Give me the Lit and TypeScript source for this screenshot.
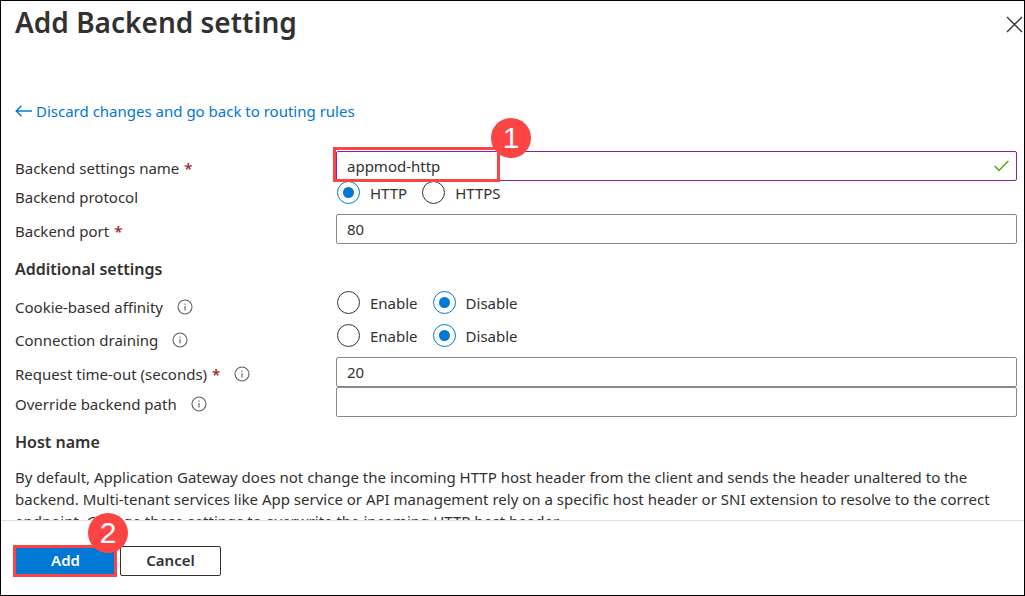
import { LitElement, html, css, nothing } from "lit";
import { customElement } from "lit/decorators.js";

interface Choice {
  value: string;
  checked?: boolean;
}

const infoIcon = html`<svg class="info" viewBox="0 0 16 16" role="img" aria-label="More information">
  <circle cx="8" cy="8" r="7" fill="none" stroke="#605e5c" stroke-width="1.1" />
  <path d="M8 7v4.6M8 4.4v1.3" fill="none" stroke="#605e5c" stroke-width="1.1" />
</svg>`;

@customElement("app-root")
export class AppRoot extends LitElement {
  static styles = css`
    :host {
      display: block;
      color: #323130;
      font: 15px/22px "Noto Sans", "Open Sans", sans-serif;
    }
    * {
      box-sizing: border-box;
    }
    .panel {
      display: flex;
      flex-direction: column;
      height: 100vh;
      border: 1px solid #000;
      background: #fff;
    }
    .header {
      display: flex;
      justify-content: space-between;
      align-items: center;
      padding: 1px 1px 0 14px;
    }
    .title {
      margin: 0;
      font-size: 28px;
      line-height: 40px;
      font-weight: 600;
    }
    .close {
      display: flex;
      padding: 4px 0 0;
      border: 0;
      background: none;
    }
    .close svg {
      width: 17px;
      height: 17px;
    }
    .body {
      flex: 1;
      min-height: 0;
      overflow: hidden;
      padding: 58px 7px 0 14px;
    }
    .back {
      display: flex;
      align-items: center;
      gap: 4px;
      width: fit-content;
      margin-bottom: 29px;
      color: #0078d4;
      text-decoration: none;
    }
    .back svg {
      width: 17px;
      height: 14px;
    }
    .row {
      display: grid;
      grid-template-columns: 321px 1fr;
    }
    .label {
      display: flex;
      align-items: center;
      align-self: start;
      padding-top: 6px;
    }
    .label.group {
      padding-top: 5px;
    }
    .required {
      margin-left: 5px;
      color: #a4262c;
      font-weight: 600;
    }
    .info {
      width: 16px;
      height: 16px;
      margin-left: 14px;
    }
    .field {
      position: relative;
    }
    .input {
      display: block;
      width: 100%;
      height: 30px;
      padding: 0 10px;
      border: 1px solid #8a8886;
      border-radius: 2px;
      background: #fff;
      color: inherit;
      font: inherit;
      outline: 0;
    }
    .input.edited {
      border-color: #881fa3;
    }
    .check {
      position: absolute;
      right: 8px;
      top: 9px;
      width: 15px;
      height: 12px;
    }
    .choices {
      display: flex;
      gap: 15px;
      height: 33px;
      padding: 0 0 0 1px;
    }
    .choice {
      display: flex;
      align-items: center;
      gap: 10px;
      height: 23px;
    }
    .radio {
      display: grid;
      place-items: center;
      appearance: none;
      width: 23px;
      height: 23px;
      margin: 0;
      border: 1px solid #323130;
      border-radius: 50%;
    }
    .radio:checked {
      border-color: #0078d4;
    }
    .radio:checked::before {
      content: "";
      width: 11px;
      height: 11px;
      border-radius: 50%;
      background: #0078d4;
    }
    .section {
      margin: 0;
      padding: 14px 0 11px;
      font-size: 16px;
      line-height: 22px;
      font-weight: 600;
    }
    .text {
      margin: 2px 0 0;
    }
    .footer {
      display: flex;
      gap: 4px;
      padding: 25px 14px 19px;
      border-top: 1px solid #e1dfdd;
    }
    .action {
      position: relative;
      display: flex;
    }
    .button {
      width: 101px;
      height: 30px;
      padding: 0 0 2px;
      border: 1px solid #323130;
      border-radius: 2px;
      background: #fff;
      color: inherit;
      font: inherit;
      font-weight: 600;
    }
    .button.primary {
      border-color: #0078d4;
      background: #0078d4;
      color: #fff;
    }
    .callout {
      position: absolute;
      border: 3px solid #fc4444;
      pointer-events: none;
    }
    .callout.name {
      left: -3px;
      top: -4px;
      width: 167px;
      height: 35px;
    }
    .callout.add {
      inset: -1px -1px -1px -2px;
    }
    .badge {
      position: absolute;
      width: 40px;
      height: 40px;
      border-radius: 50%;
      background: #fc4444;
      color: #fff;
      font: 30px/40px "Liberation Sans", Arial, sans-serif;
      text-align: center;
    }
    .callout.name .badge {
      right: -34px;
      top: -32px;
    }
    .callout.add .badge {
      right: -14px;
      top: -35px;
    }
  `;

  private labelContent(text: string, required: boolean, info: boolean) {
    return html`${text}${required ? html`<span class="required">*</span>` : nothing}${info ? infoIcon : nothing}`;
  }

  private textRow(id: string, text: string, value: string, required = false, info = false) {
    return html`<div class="row">
      <label class="label" for=${id}>${this.labelContent(text, required, info)}</label>
      <div class="field"><input class="input" id=${id} type="text" .value=${value} /></div>
    </div>`;
  }

  private radioRow(name: string, text: string, choices: Choice[], info = false) {
    return html`<div class="row" role="radiogroup" aria-labelledby=${name}>
      <div class="label group" id=${name}>${this.labelContent(text, false, info)}</div>
      <div class="choices">
        ${choices.map(
          (c) => html`<label class="choice">
            <input class="radio" type="radio" name=${name} value=${c.value} ?checked=${c.checked} />
            <span>${c.value}</span>
          </label>`
        )}
      </div>
    </div>`;
  }

  render() {
    const toggles: Choice[] = [{ value: "Enable" }, { value: "Disable", checked: true }];
    return html`<main class="panel">
      <header class="header">
        <h1 class="title">Add Backend setting</h1>
        <button class="close" aria-label="Close">
          <svg viewBox="0 0 17 17"><path d="M1 1l15 15M16 1L1 16" fill="none" stroke="#323130" stroke-width="1.3" /></svg>
        </button>
      </header>
      <div class="body">
        <a class="back" href="#">
          <svg viewBox="0 0 17 14" aria-hidden="true">
            <path d="M17 7H1.2M6.5 1.8L1.2 7l5.3 5.2" fill="none" stroke="#0078d4" stroke-width="1.4" />
          </svg>
          <span>Discard changes and go back to routing rules</span>
        </a>
        <div class="row">
          <label class="label" for="settings-name">${this.labelContent("Backend settings name", true, false)}</label>
          <div class="field">
            <input class="input edited" id="settings-name" type="text" value="appmod-http" />
            <svg class="check" viewBox="0 0 15 12" aria-hidden="true">
              <path d="M.7 6l4.3 4.4L14.3 1" fill="none" stroke="#57a300" stroke-width="1.4" />
            </svg>
            <div class="callout name"><span class="badge">1</span></div>
          </div>
        </div>
        ${this.radioRow("protocol", "Backend protocol", [{ value: "HTTP", checked: true }, { value: "HTTPS" }])}
        ${this.textRow("port", "Backend port", "80", true)}
        <h2 class="section">Additional settings</h2>
        ${this.radioRow("affinity", "Cookie-based affinity", toggles, true)}
        ${this.radioRow("draining", "Connection draining", toggles, true)}
        ${this.textRow("timeout", "Request time-out (seconds)", "20", true, true)}
        ${this.textRow("path", "Override backend path", "", false, true)}
        <h2 class="section">Host name</h2>
        <p class="text">
          By default, Application Gateway does not change the incoming HTTP host header from the client and sends the
          header unaltered to the backend. Multi-tenant services like App service or API management rely on a specific
          host header or SNI extension to resolve to the correct endpoint. Change these settings to overwrite the
          incoming HTTP host header.
        </p>
      </div>
      <footer class="footer">
        <div class="action">
          <button class="button primary">Add</button>
          <div class="callout add"><span class="badge">2</span></div>
        </div>
        <button class="button">Cancel</button>
      </footer>
    </main>`;
  }
}
